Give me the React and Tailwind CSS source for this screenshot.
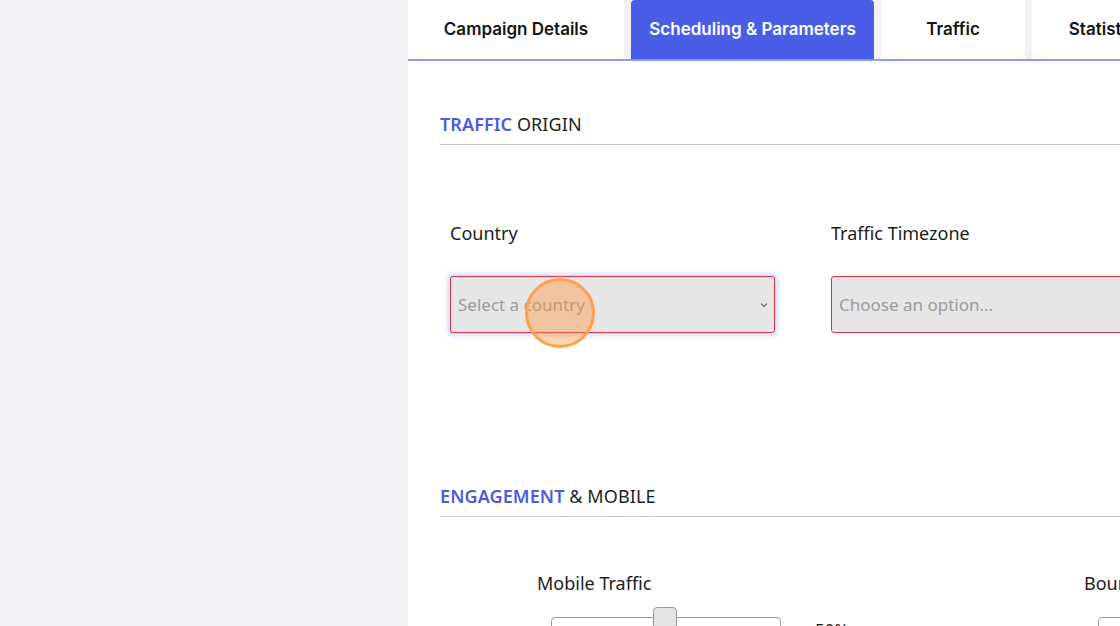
const tabs = [
  { label: "Campaign Details", w: "w-[216px]" },
  { label: "Scheduling & Parameters", w: "w-[243px]", active: true },
  { label: "Traffic", w: "w-[144px]" },
  { label: "Statistics", w: "w-[150px]" },
];

const SectionTitle = ({ accent, rest }) => (
  <h2 className="text-[18px] leading-7 pb-[6px] border-b border-[#c6c6c6] text-[#1f1f1f] tracking-[0.1px]">
    <span className="font-semibold text-[#4a5bdc]">{accent}</span> {rest}
  </h2>
);

const Chevron = () => (
  <svg width="12" height="12" viewBox="0 0 12 12" className="text-[#777]">
    <path d="M3 4.5 L6 7.5 L9 4.5" fill="none" stroke="currentColor" strokeWidth="1.3" />
  </svg>
);

export default function App() {
  return (
    <div className="w-[1120px] h-[626px] overflow-hidden flex bg-white" style={{ fontFamily: '"Noto Sans", "Open Sans", sans-serif' }}>
      {/* left rail */}
      <div className="w-[408px] shrink-0 bg-[#f0f2f5]" />

      <div className="w-[1000px] shrink-0">
        {/* tabs */}
        <div className="flex gap-[7px] h-[61px] bg-[#f0f2f5] border-b-2 border-[#8d9cea]" style={{ fontFamily: "Inter, sans-serif" }}>
          {tabs.map((t) => (
            <div
              key={t.label}
              className={`${t.w} shrink-0 flex items-center justify-center text-[17px] font-semibold ${
                t.active ? "bg-[#4a5de6] text-white rounded-t-[4px]" : "bg-white text-[#151515]"
              }`}
            >
              {t.label}
            </div>
          ))}
        </div>

        <div className="pl-8 pt-[49px]">
          <SectionTitle accent="TRAFFIC" rest="ORIGIN" />

          <div className="flex gap-[56px] pl-[10px] mt-[75px]">
            <div className="w-[325px]">
              <div className="text-[18px] leading-[26px] text-[#1c1c1c]">Country</div>
              <div className="relative mt-[30px]">
                <div className="h-[57px] flex items-center justify-between pl-[7px] pr-[4px] bg-[#e6e6e6] border border-[#d8324a] rounded-[3px] shadow-[0_0_5px_2px_rgba(90,150,255,0.4)]">
                  <span className="text-[17px] text-[#9b9b9b]">Select a country</span>
                  <Chevron />
                </div>
                <div className="absolute left-[75px] top-[2px] w-[70px] h-[70px] rounded-full border-[3px] border-[#ff9f50] bg-[rgba(255,150,60,0.42)]" />
              </div>
            </div>

            <div className="w-[325px]">
              <div className="text-[18px] leading-[26px] text-[#1c1c1c]">Traffic Timezone</div>
              <div className="mt-[30px] h-[57px] flex items-center pl-[7px] bg-[#e6e6e6] border border-[#d8324a] rounded-[3px]">
                <span className="text-[17px] text-[#9b9b9b]">Choose an option...</span>
              </div>
            </div>
          </div>

          <div className="mt-[149px]">
            <SectionTitle accent="ENGAGEMENT" rest="& MOBILE" />
          </div>

          <div className="flex mt-[53px]">
            <div className="pl-[97px] w-[644px] shrink-0">
              <div className="text-[18px] leading-[26px] text-[#1c1c1c]">Mobile Traffic</div>
              <div className="flex items-start mt-[11px] pl-[14px]">
                <div className="relative w-[230px] h-[20px] mt-[10px] bg-white border border-[#9a9a9a] rounded-[4px]">
                  <div className="absolute left-[101px] top-[-11px] w-[24px] h-[26px] bg-[#e4e4e4] border border-[#9a9a9a] rounded-[4px]" />
                </div>
                <div className="ml-[34px] mt-[10px] text-[17px] text-[#1c1c1c]">50%</div>
              </div>
            </div>
            <div>
              <div className="text-[18px] leading-[26px] text-[#1c1c1c]">Bounce Rate</div>
              <div className="mt-[21px] ml-[14px] w-[230px] h-[20px] bg-white border border-[#9a9a9a] rounded-[4px]" />
            </div>
          </div>
        </div>
      </div>
    </div>
  );
}
